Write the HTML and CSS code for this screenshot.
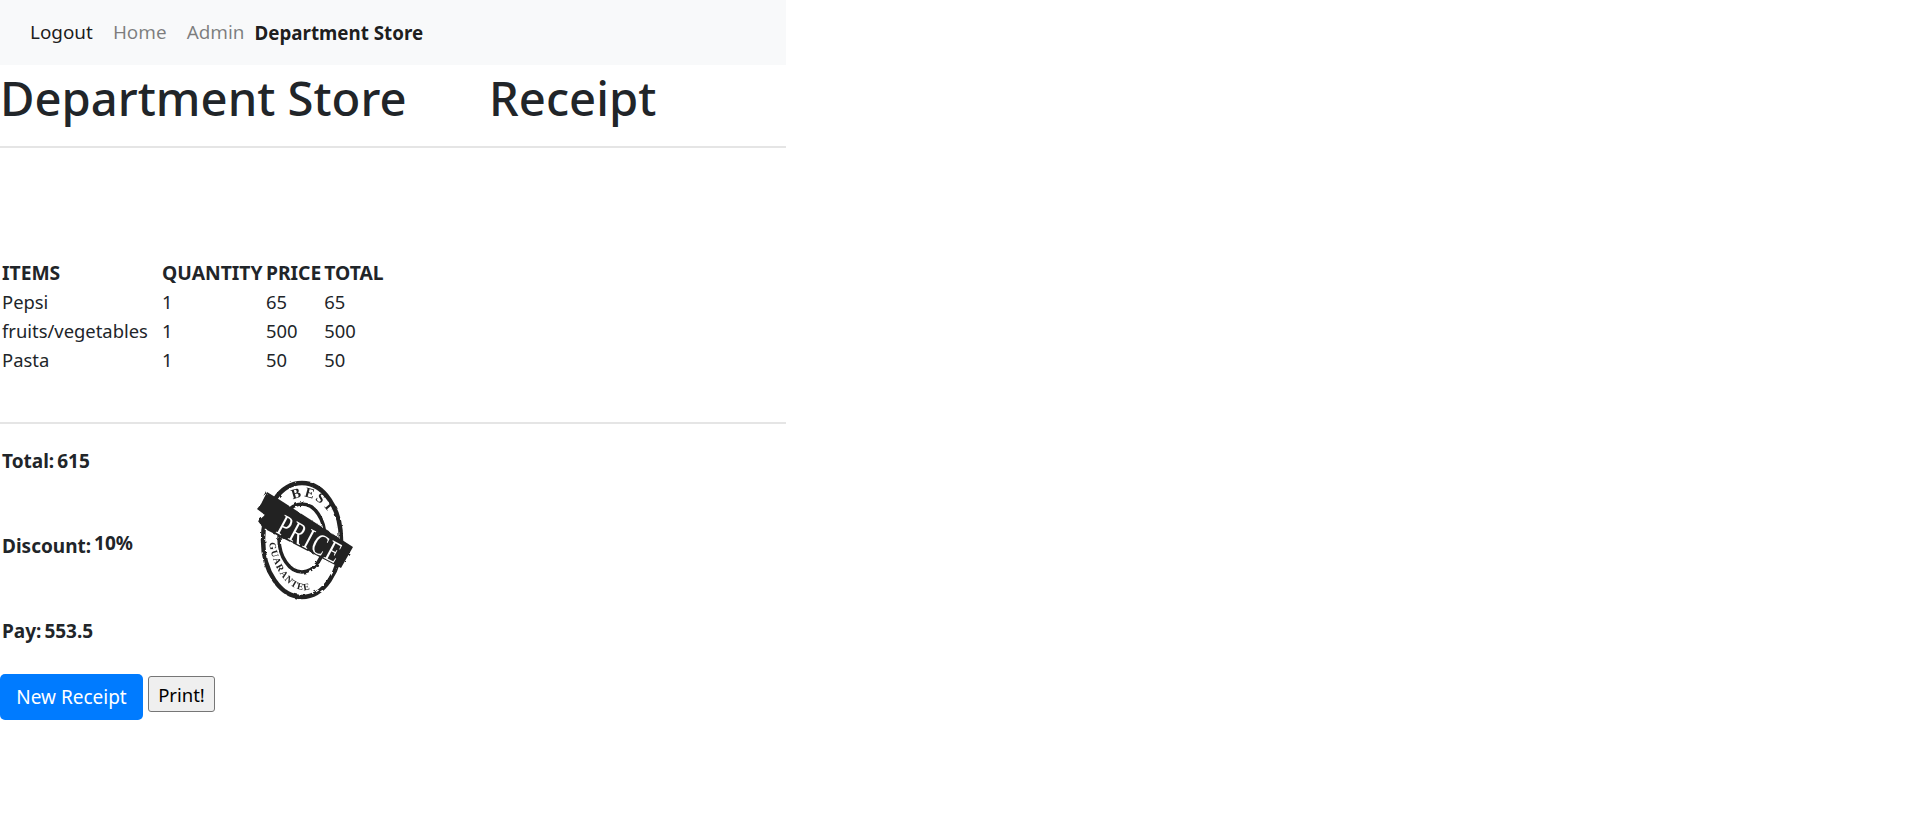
FILE: index.html
```html
<!DOCTYPE html>
<html lang="en">
<head>
<meta charset="utf-8">
<title>Department Store Receipt</title>
<link rel="stylesheet" href="styles.css">
</head>
<body>
<div class="page">
  <nav class="navbar">
    <a class="nav-link active" href="#">Logout</a>
    <a class="nav-link" href="#">Home</a>
    <a class="nav-link" href="#">Admin</a>
    <a class="brand" href="#">Department Store</a>
  </nav>
  <h1 class="title"><span class="title-store">Department Store</span><span>Receipt</span></h1>
  <hr class="rule">
  <table class="items">
    <thead>
      <tr><th class="col-item">ITEMS</th><th class="col-qty">QUANTITY</th><th class="col-price">PRICE</th><th>TOTAL</th></tr>
    </thead>
    <tbody>
      <tr><td>Pepsi</td><td>1</td><td>65</td><td>65</td></tr>
      <tr><td>fruits/vegetables</td><td>1</td><td>500</td><td>500</td></tr>
      <tr><td>Pasta</td><td>1</td><td>50</td><td>50</td></tr>
    </tbody>
  </table>
  <hr class="rule rule-lower">
  <section class="summary">
    <div class="figures">
      <div class="figure"><span>Total:</span><span>615</span></div>
      <div class="figure"><span>Discount:</span><span class="raised">10%</span></div>
      <div class="figure"><span>Pay:</span><span>553.5</span></div>
    </div>
    <svg class="stamp" viewBox="0 0 140 150" aria-label="Best Price Guarantee stamp">
      <defs>
        <filter id="worn" x="-10%" y="-10%" width="120%" height="120%">
          <feTurbulence type="fractalNoise" baseFrequency="0.22" numOctaves="2" seed="4"/>
          <feDisplacementMap in="SourceGraphic" scale="3"/>
          <feGaussianBlur stdDeviation="0.5"/>
        </filter>
        <filter id="soft"><feGaussianBlur stdDeviation="0.35"/></filter>
        <path id="arc-top" d="M63 41 C76 33 92 41 103 60"/>
        <path id="arc-bottom" d="M39 84 C44 114 60 132 76 131 C84 130 91 125 96 116"/>
      </defs>
      <g filter="url(#worn)">
        <ellipse class="ring-outer" cx="72" cy="81" rx="39" ry="57"/>
        <ellipse class="ring-inner" cx="72" cy="79" rx="23" ry="34"/>
        <polygon class="band" points="37,33 50,41 123,88 111,109 33,69 28,62 35,56 27,50 31,45"/>
      </g>
      <g filter="url(#soft)">
        <text class="stamp-small"><textPath href="#arc-top">BEST</textPath></text>
        <text class="stamp-main" transform="translate(45 73) rotate(28) scale(.8 1.12)">PRICE</text>
        <text class="stamp-tiny"><textPath href="#arc-bottom">GUARANTEE</textPath></text>
      </g>
    </svg>
  </section>
  <div class="actions">
    <a class="btn-primary" href="#">New Receipt</a>
    <button class="btn-plain" type="button">Print!</button>
  </div>
</div>
</body>
</html>
```

FILE: styles.css
```css
* { box-sizing: border-box; }

body {
  margin: 0;
  background: #fff;
  color: #212529;
  font-family: "Noto Sans", "Open Sans", sans-serif;
  font-size: 19px;
  line-height: 29px;
}

.page { width: 786px; }

.navbar {
  display: flex;
  align-items: center;
  height: 65px;
  padding-left: 20px;
  background: #f8f9fa;
}

.nav-link {
  padding: 0 10px;
  color: rgba(0, 0, 0, .5);
  font-size: 18.9px;
  text-decoration: none;
}
.nav-link.active { color: rgba(0, 0, 0, .9); }

.brand {
  color: rgba(0, 0, 0, .9);
  font-size: 18.75px;
  font-weight: 700;
  text-decoration: none;
}

.title {
  display: flex;
  margin: 0;
  height: 65px;
  font-size: 47.2px;
  font-weight: 500;
  line-height: 67px;
}
.title-store { width: 489px; }

.rule {
  margin: 16px 0 0;
  border: 0;
  border-top: 2px solid rgba(0, 0, 0, .1);
}

.items {
  margin-top: 110px;
  border-collapse: collapse;
  table-layout: fixed;
}
.items th, .items td {
  height: 29px;
  padding: 0 1px 0 2px;
  font-size: 18.4px;
  text-align: left;
  white-space: nowrap;
}
.items th {
  font-size: 19.3px;
  font-weight: 700;
}
.col-item { width: 160px; }
.col-qty { width: 104px; }
.col-price { width: 57px; }

.rule-lower { margin-top: 48px; }

.summary {
  display: flex;
  align-items: flex-start;
  height: 250px;
}

.figures {
  display: flex;
  flex-direction: column;
  gap: 56px;
  width: 230px;
  padding: 23px 0 0 2px;
}
.figure {
  display: flex;
  gap: 3px;
  font-weight: 700;
}
.raised { transform: translateY(-3px); }

.stamp {
  width: 140px;
  height: 150px;
  margin-top: 35px;
  flex: none;
}
.ring-outer { fill: none; stroke: #222; stroke-width: 4.5; }
.ring-inner { fill: none; stroke: #222; stroke-width: 3.5; }
.band { fill: #222; }
.stamp-small, .stamp-main, .stamp-tiny {
  font-family: "Liberation Serif", serif;
}
.stamp-small { font-size: 14px; font-weight: 700; letter-spacing: 2px; fill: #222; }
.stamp-main { font-size: 27px; letter-spacing: 2px; fill: #fff; }
.stamp-tiny { font-size: 9.5px; font-weight: 700; letter-spacing: 1px; fill: #222; }

.actions {
  display: flex;
  align-items: flex-start;
  gap: 5px;
}
.btn-primary {
  display: flex;
  align-items: center;
  justify-content: center;
  width: 143px;
  height: 46px;
  border-radius: 5px;
  background: #007bff;
  color: #fff;
  text-decoration: none;
}
.btn-plain {
  width: 67px;
  height: 36px;
  margin-top: 2px;
  padding: 0;
  border: 1px solid #767676;
  border-radius: 3px;
  background: #efefef;
  color: #000;
  font: inherit;
  font-size: 18.5px;
}
```
